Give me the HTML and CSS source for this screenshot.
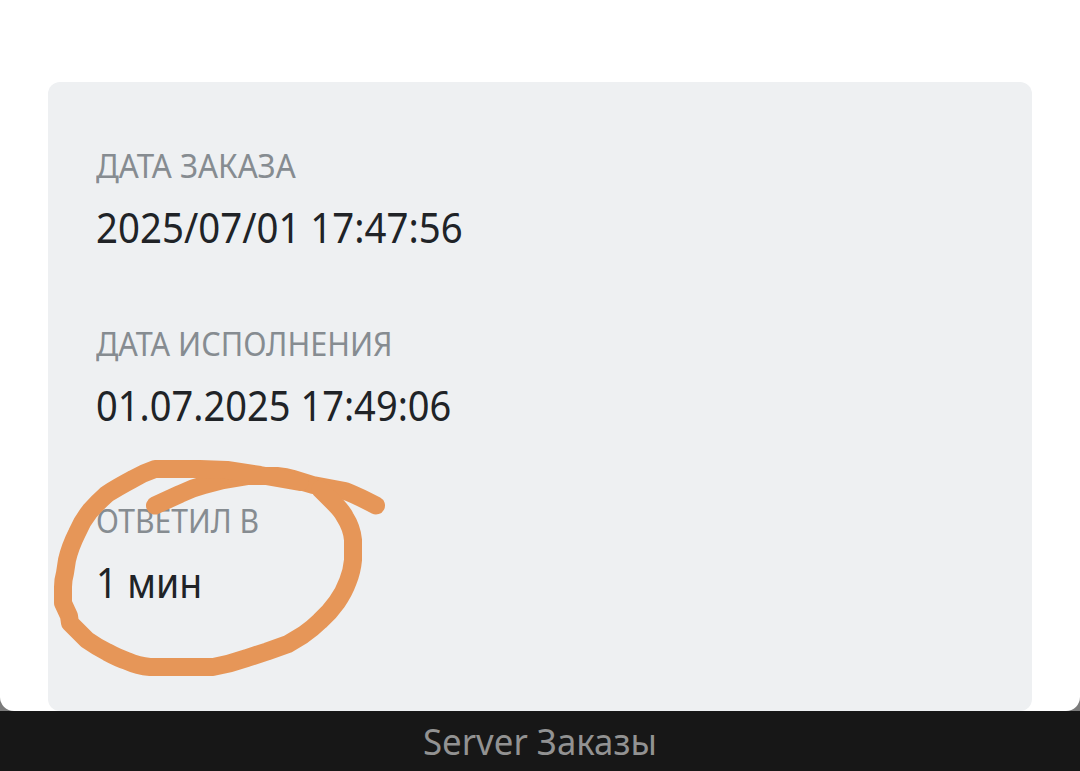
FILE: index.html
```
<!DOCTYPE html>
<html lang="ru">
<head>
<meta charset="utf-8">
<title>Server Заказы</title>
<link rel="stylesheet" href="styles.css">
</head>
<body>
<div class="screen">
  <main class="page">
    <dl class="card">
      <div class="row">
        <dt class="label"><span class="fit date">ДАТА ЗАКАЗА</span></dt>
        <dd class="value"><span class="fit ordered">2025/07/01 17:47:56</span></dd>
      </div>
      <div class="row">
        <dt class="label"><span class="fit done">ДАТА ИСПОЛНЕНИЯ</span></dt>
        <dd class="value"><span class="fit completed">01.07.2025 17:49:06</span></dd>
      </div>
      <div class="row">
        <dt class="label"><span class="fit reply">ОТВЕТИЛ В</span></dt>
        <dd class="value"><span class="fit minutes">1 мин</span></dd>
      </div>
    </dl>
  </main>
  <footer class="bar"><span class="title">Server Заказы</span></footer>
  <svg class="marker" viewBox="0 0 1080 771" aria-hidden="true">
    <path d="M155 505.500L180 494Q192 488 204 485L223 480L247 476H277Q286 477 293 479L313 485L345 491Q354 494 376 505.500"/>
    <path d="M300 482L260 475L227 470L200 469H155Q143 473 133 479Q118 487 107 494Q97 503 90 511Q82 521 77 533Q70 547 67 560L65 573Q63 580 63 587V603L69 616L70 623L87 640Q97 647 107 652Q118 658 127 661Q138 666 150 667H213Q230 664 247 658L267 651.500L288 644L303 635Q313 628 320 621Q330 612 337 602Q344 592 348 581Q352 571 353 560V540Q352 528 345 517Q342 511 334 503L320 489"/>
  </svg>
</div>
</body>
</html>
```
FILE: styles.css
```
* { box-sizing: border-box; }
body {
  margin: 0;
  font-family: "Noto Sans", "Open Sans", sans-serif;
}
.screen {
  position: relative;
  display: flex;
  flex-direction: column;
  height: 771px;
  overflow: hidden;
  background: #7b7b7b;
}
.page {
  height: 711px;
  padding: 82px 48px 0;
  background: #fff;
  border-radius: 0 0 14px 14px;
}
.card {
  display: flex;
  flex-direction: column;
  gap: 53.500px;
  height: 629px;
  margin: 0;
  padding: 60px 48px 0;
  background: #eef0f2;
  border-radius: 12px;
}
.row { height: 124px; }
.label {
  height: 47px;
  font-size: 32px;
  line-height: 47px;
  color: #868c91;
}
.value {
  height: 77px;
  margin: 0;
  font-size: 41px;
  line-height: 76px;
  color: #202327;
}
.fit {
  display: inline-block;
  white-space: nowrap;
  transform-origin: left center;
}
.date { transform: scaleX(0.979); }
.done { transform: scaleX(0.956); }
.reply { transform: scaleX(0.94); }
.ordered { transform: scaleX(0.937); }
.completed { transform: scaleX(0.928); }
.minutes { transform: scaleX(0.913); }
.bar {
  height: 60px;
  background: #171717;
  color: #929292;
  font-size: 36px;
  line-height: 61px;
  text-align: center;
}
.title {
  display: inline-block;
  transform: scaleX(0.967);
}
.marker {
  position: absolute;
  inset: 0;
  width: 1080px;
  height: 771px;
  fill: none;
  stroke: #e69658;
  stroke-width: 18;
  stroke-linecap: round;
  stroke-linejoin: round;
  pointer-events: none;
}
```
